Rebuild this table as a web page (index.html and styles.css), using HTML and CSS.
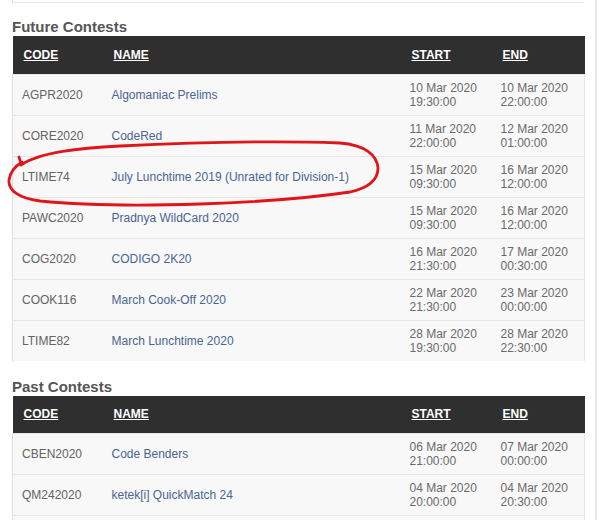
FILE: index.html
```html
<!DOCTYPE html>
<html>
<head>
<meta charset="utf-8">
<link rel="stylesheet" href="styles.css">
</head>
<body>
<div class="page">
  <main class="main">
    <div class="prev-end"></div>
    <h3 class="heading">Future Contests</h3>
    <table class="contests">
      <colgroup><col class="c-code"><col class="c-name"><col class="c-start"><col class="c-end"></colgroup>
      <thead>
        <tr><th><a href="#">CODE</a></th><th><a href="#">NAME</a></th><th><a href="#">START</a></th><th><a href="#">END</a></th></tr>
      </thead>
      <tbody>
        <tr><td class="code">AGPR2020</td><td><a href="#">Algomaniac Prelims</a></td><td class="date">10 Mar 2020<br>19:30:00</td><td class="date">10 Mar 2020<br>22:00:00</td></tr>
        <tr><td class="code">CORE2020</td><td><a href="#">CodeRed</a></td><td class="date">11 Mar 2020<br>22:00:00</td><td class="date">12 Mar 2020<br>01:00:00</td></tr>
        <tr><td class="code">LTIME74</td><td><a href="#">July Lunchtime 2019 (Unrated for Division-1)</a></td><td class="date">15 Mar 2020<br>09:30:00</td><td class="date">16 Mar 2020<br>12:00:00</td></tr>
        <tr><td class="code">PAWC2020</td><td><a href="#">Pradnya WildCard 2020</a></td><td class="date">15 Mar 2020<br>09:30:00</td><td class="date">16 Mar 2020<br>12:00:00</td></tr>
        <tr><td class="code">COG2020</td><td><a href="#">CODIGO 2K20</a></td><td class="date">16 Mar 2020<br>21:30:00</td><td class="date">17 Mar 2020<br>00:30:00</td></tr>
        <tr><td class="code">COOK116</td><td><a href="#">March Cook-Off 2020</a></td><td class="date">22 Mar 2020<br>21:30:00</td><td class="date">23 Mar 2020<br>00:00:00</td></tr>
        <tr><td class="code">LTIME82</td><td><a href="#">March Lunchtime 2020</a></td><td class="date">28 Mar 2020<br>19:30:00</td><td class="date">28 Mar 2020<br>22:30:00</td></tr>
      </tbody>
    </table>
    <h3 class="heading past">Past Contests</h3>
    <table class="contests">
      <colgroup><col class="c-code"><col class="c-name"><col class="c-start"><col class="c-end"></colgroup>
      <thead>
        <tr><th><a href="#">CODE</a></th><th><a href="#">NAME</a></th><th><a href="#">START</a></th><th><a href="#">END</a></th></tr>
      </thead>
      <tbody>
        <tr><td class="code">CBEN2020</td><td><a href="#">Code Benders</a></td><td class="date">06 Mar 2020<br>21:00:00</td><td class="date">07 Mar 2020<br>00:00:00</td></tr>
        <tr><td class="code">QM242020</td><td><a href="#">ketek[i] QuickMatch 24</a></td><td class="date">04 Mar 2020<br>20:00:00</td><td class="date">04 Mar 2020<br>20:30:00</td></tr>
        <tr><td class="code">&nbsp;</td><td>&nbsp;</td><td class="date">&nbsp;<br>&nbsp;</td><td class="date">&nbsp;<br>&nbsp;</td></tr>
      </tbody>
    </table>
  </main>
  <aside class="side"></aside>
</div>
<svg class="scribble" width="601" height="520" viewBox="0 0 601 520">
  <path d="M19 157 C20 160 21 163 21 165 C40 152 80 148 120 146 C200 142 280 141 340 143 C365 145 377 155 378 168 C378 180 368 188 350 192 C310 198 260 202 200 204 C140 206 80 205 40 201 C18 198 8 190 9 180 C10 172 14 167 22 162" fill="none" stroke="#e0141b" stroke-width="2.8" stroke-linecap="round" stroke-linejoin="round"/>
</svg>
</body>
</html>
```

FILE: styles.css
```css
html, body {
  margin: 0;
  padding: 0;
  background: #ffffff;
  height: 100%;
  overflow: hidden;
}
body {
  font-family: "Liberation Sans", Arial, sans-serif;
  position: relative;
}
.page {
  display: flex;
  height: 520px;
}
.main {
  width: 572px;
  margin-left: 12px;
}
.side {
  margin-left: 11px;
  width: 0;
  border-left: 2px solid #e8e8e8;
}
.prev-end {
  height: 2px;
  border-left: 1px solid #dddddd;
  border-bottom: 1px solid #e6e6e6;
}
.heading {
  margin: 14px 0 0 0;
  font-size: 15px;
  line-height: 19px;
  font-weight: bold;
  color: #555555;
}
.heading.past {
  margin-top: 16px;
}
.contests {
  width: 572px;
  border-collapse: collapse;
  table-layout: fixed;
}
.c-code { width: 90px; }
.c-name { width: 298px; }
.c-start { width: 91px; }
.c-end { width: 93px; }
.contests th {
  background: #2f2f2f;
  height: 38px;
  padding: 0 0 0 11px;
  text-align: left;
  font-size: 12px;
  font-weight: bold;
  box-sizing: border-box;
}
.contests th a {
  color: #ffffff;
  text-decoration: underline;
}
.contests td {
  background: #f8f8f8;
  height: 40px;
  padding: 0 0 0 9px;
  font-size: 12px;
  line-height: 14px;
  color: #636363;
  border-top: 1px solid #e6e6e6;
  vertical-align: middle;
}
.contests tbody tr td:first-child {
  border-left: 1px solid #dddddd;
}
.contests tbody tr td:last-child {
  border-right: 1px solid #e6e6e6;
}
.contests td a {
  color: #4a6591;
  text-decoration: none;
}
.contests td.date {
  color: #6a6a6a;
}
.scribble {
  position: absolute;
  left: 0;
  top: 0;
  pointer-events: none;
}
```
